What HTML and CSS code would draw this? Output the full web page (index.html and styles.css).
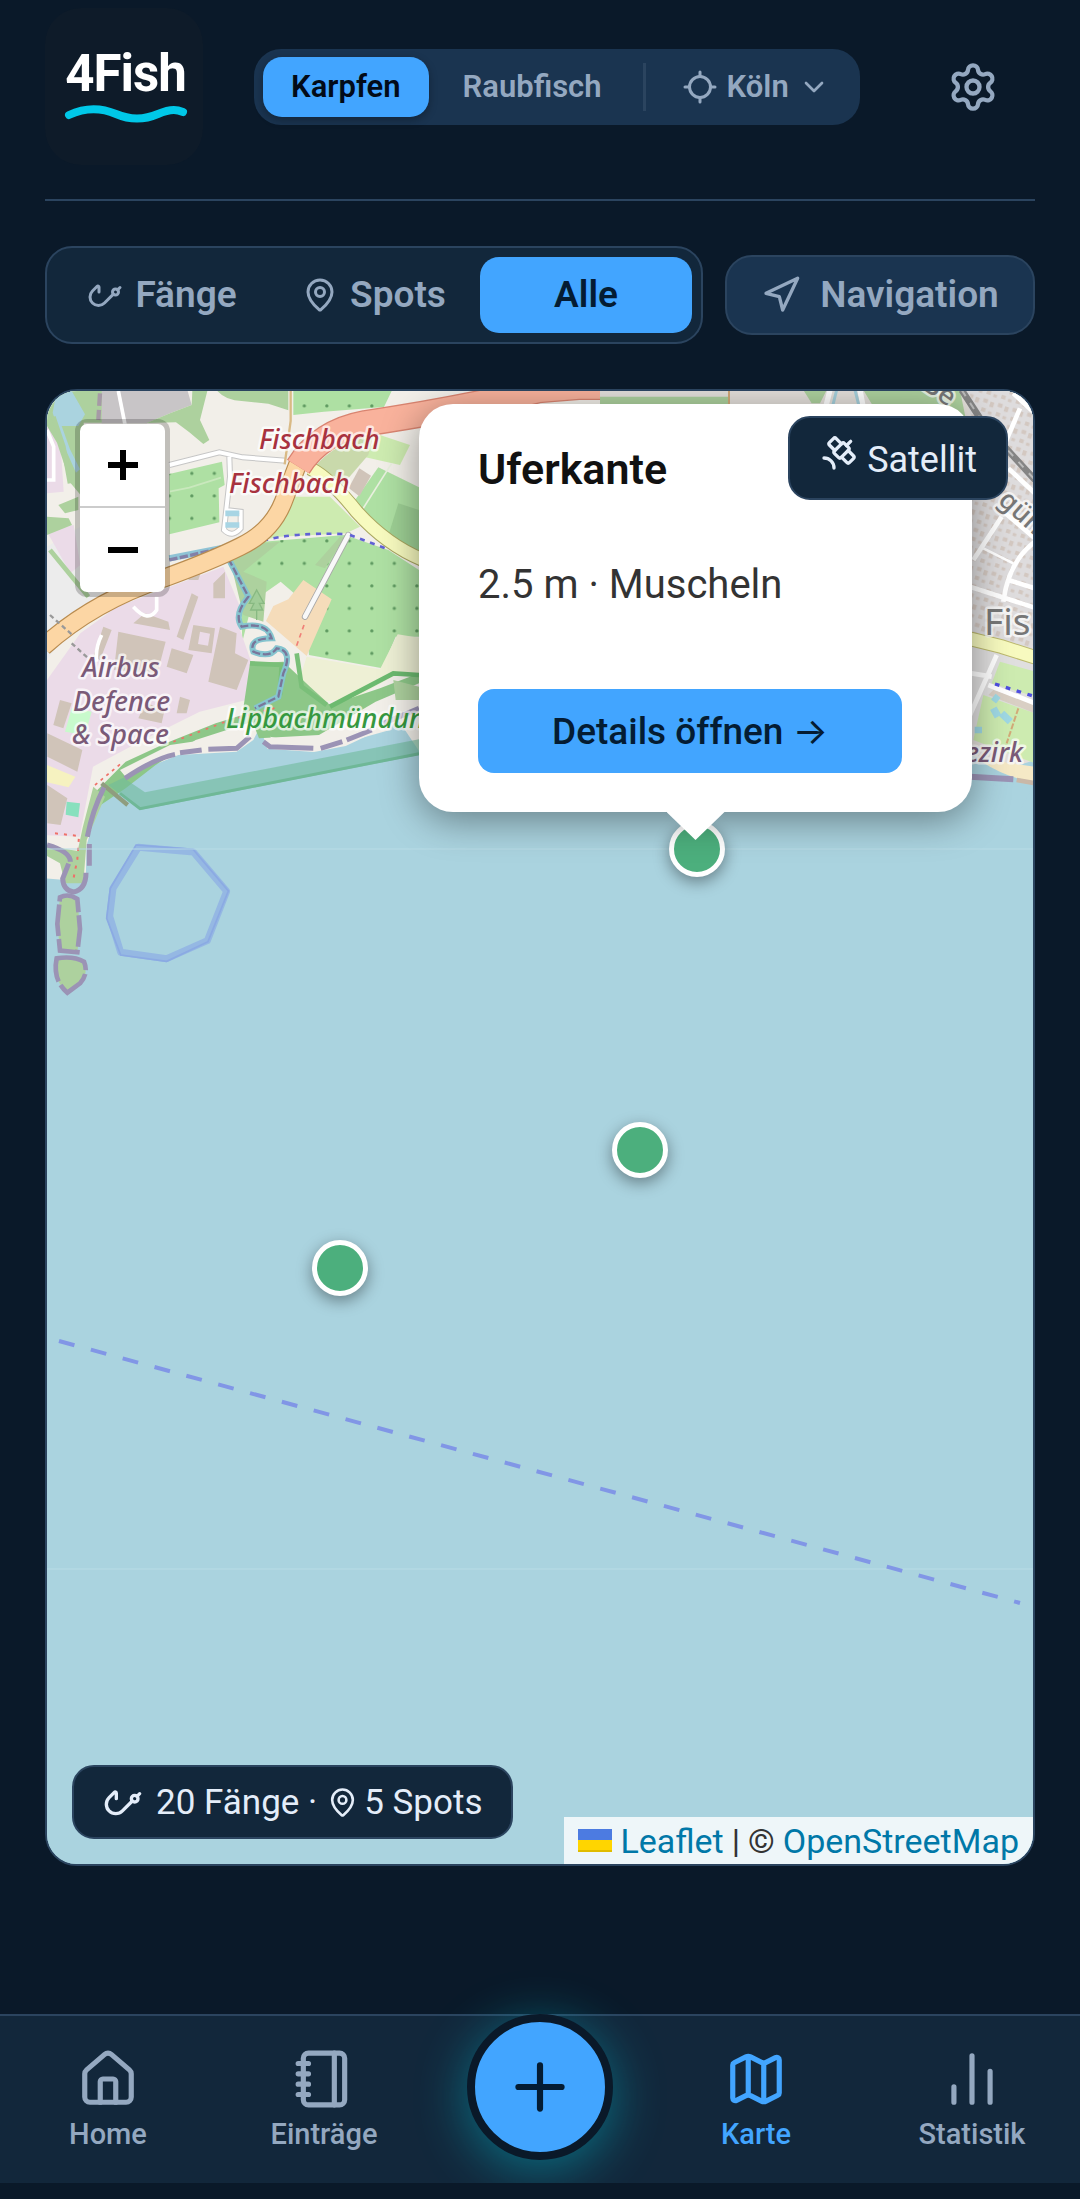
FILE: index.html
```html
<!DOCTYPE html>
<html lang="de">
<head>
<meta charset="utf-8">
<meta name="viewport" content="width=device-width, initial-scale=1">
<title>4Fish – Karte</title>
<link rel="stylesheet" href="styles.css">
</head>
<body>
<svg class="sprite" aria-hidden="true">
  <symbol id="i-hook" viewBox="0 0 24 24"><path d="m17.586 11.414-5.93 5.93a1 1 0 0 1-8-8l3.137-3.137a.707.707 0 0 1 1.207.5V10"/><path d="M20.414 8.586 22 7"/><circle cx="19" cy="10" r="2"/></symbol>
  <symbol id="i-pin" viewBox="0 0 24 24"><path d="M20 10c0 4.993-5.539 10.193-7.399 11.799a1 1 0 0 1-1.202 0C9.539 20.193 4 14.993 4 10a8 8 0 0 1 16 0"/><circle cx="12" cy="10" r="3"/></symbol>
</svg>

<header class="header">
  <a class="logo" href="#" aria-label="4Fish">
    <span class="logo-text">4Fish</span>
    <svg class="logo-wave" viewBox="0 0 124 18" aria-hidden="true"><path d="M5 10C22 2 38 3 52 9s28 6 42 0 20-4 25-2"/></svg>
  </a>
  <div class="mode">
    <button class="mode-btn is-active" type="button">Karpfen</button>
    <button class="mode-btn" type="button">Raubfisch</button>
    <span class="mode-divider"></span>
    <button class="place" type="button">
      <svg class="icon icon-36" viewBox="0 0 24 24"><path d="M2 12h3M19 12h3M12 2v3M12 19v3"/><circle cx="12" cy="12" r="7"/></svg>
      Köln
      <svg class="icon icon-chevron" viewBox="0 0 24 24"><path d="m6 9 6 6 6-6"/></svg>
    </button>
  </div>
  <button class="settings" type="button" aria-label="Einstellungen">
    <svg class="icon icon-52" viewBox="0 0 24 24"><path d="M9.671 4.136a2.34 2.34 0 0 1 4.659 0 2.34 2.34 0 0 0 3.319 1.915 2.34 2.34 0 0 1 2.33 4.033 2.34 2.34 0 0 0 0 3.831 2.34 2.34 0 0 1-2.33 4.033 2.34 2.34 0 0 0-3.319 1.915 2.34 2.34 0 0 1-4.659 0 2.34 2.34 0 0 0-3.32-1.915 2.34 2.34 0 0 1-2.33-4.033 2.34 2.34 0 0 0 0-3.831A2.34 2.34 0 0 1 6.35 6.051a2.34 2.34 0 0 0 3.319-1.915"/><circle cx="12" cy="12" r="3"/></svg>
  </button>
</header>

<main class="main">
  <div class="toolbar">
    <div class="filter">
      <button class="filter-btn" type="button"><svg class="icon icon-36"><use href="#i-hook"/></svg>Fänge</button>
      <button class="filter-btn" type="button"><svg class="icon icon-36"><use href="#i-pin"/></svg>Spots</button>
      <button class="filter-btn is-active" type="button">Alle</button>
    </div>
    <button class="nav-btn" type="button"><svg class="icon icon-40" viewBox="0 0 24 24"><path d="M3 11 22 2l-9 19-2-8z"/></svg>Navigation</button>
  </div>

  <section class="map" aria-label="Karte">
    <svg class="map-tiles" viewBox="47 391 986 1473" preserveAspectRatio="xMidYMin slice" aria-hidden="true">
      <defs>
        <pattern id="orchard" width="67.5" height="67.5" patternUnits="userSpaceOnUse" patternTransform="translate(-16 -19)"><circle cx="29" cy="29" r="5" fill="#5f9a61"/></pattern>
        <pattern id="houses" width="46" height="54" patternUnits="userSpaceOnUse" patternTransform="rotate(18)"><path d="M4 5h14v12H4zM26 9h12v16H26zM6 33h13v12H6zM28 38h11v9H28z" fill="#d3c8c1"/></pattern>
      </defs>
      <rect x="47" y="391" width="986" height="1473" fill="#aad3df"/>
      <g transform="translate(30 380) scale(.33333)">
        <path d="M51 33h2960v1080H1167l-60-90-160 75-95 18-140-10-22-66-20 40-50 35-175 10-110 45-60 35-60 40-45 150-3 110-120-10z" fill="#f2efe9"/>
        <path d="M51 500l100-60 60 200-100 120-60 80z" fill="#ececec"/>
        <path d="M51 140l40 40 10 155-50 5zM51 455l80-20 20 120-30 25z" fill="#ebdbe8"/>
        <path d="M51 33h170v95h-60l10 240-50-60-40-120-30-50z" fill="#add19e"/>
        <path d="M80 33l45 0 40 70-20 35-50 0 25 70 30 60-12 10-40-90-30-90z" fill="#aad3df"/>
        <path d="M85 375l60-25v40l-40 10zM51 410l65 5 10 20-75 30z" fill="#add19e"/>
        <path d="M60 510l115 140M70 110l30 90 20 110" stroke="#add19e" stroke-width="14" fill="none"/>
        <path d="M215 33h258l12 42-65 25-70 30H215z" fill="#c8c5c7"/>
        <path d="M265 33l20 100" stroke="#fff" stroke-width="11"/>
        <path d="M210 40l-5 80" stroke="#a69aa6" stroke-width="13" stroke-dasharray="38 12"/>
        <path d="M487 33h45l-22 87 28 60-18 12-42-35-40-30-88 2 70-29 65-25zM562 33h213v58l-60-20-80-8q-45 0-73-30z" fill="#add19e"/>
        <path d="M790 33h295l-23 48-180 14-92 10zM418 282l158-37 8 70-18 10 2 102-150 36z" fill="#aee0a3"/>
        <path d="M790 33h295l-23 48-180 14-92 10zM418 282l158-37 8 70-18 10 2 102-150 36z" fill="url(#orchard)"/>
        <path d="M418 335l60-12 95-30" stroke="#c9e8bd" stroke-width="5" fill="none"/>
        <path d="M1050 165l90 30-30 60-110-25z" fill="#cdebb0"/>
        <path d="M850 265q65-80 180-100l-15 60-95 110z" fill="#c9d9ab"/>
        <path d="M1045 262l122 60v200l-120-80-80-70z" fill="#aee0a3"/>
        <path d="M1105 370l62 20v130l-90-60z" fill="#9dcf94"/>
        <path d="M988 265l35 22-35 62-32-25z" fill="#d0c4b9"/>
        <path d="M1085 250l-95 150" stroke="#e9efdf" stroke-width="5"/>
        <path d="M790 350l110 0 90 90-42 20-200 10-48 10q55-50 90-130z" fill="#cdebb0"/>
        <path d="M600 540l100-55 245-20 130 45 92 60v200l-70 0-40 95-220-40-15-160-70-60-85 60-30 120-5-150z" fill="#aee0a3"/>
        <path d="M600 540l100-55 245-20 130 45 92 60v200l-70 0-40 95-220-40-15-160-70-60-85 60-30 120-5-150z" fill="url(#orchard)"/>
        <path d="M600 540l100-50 50-5-110 90 70 30-10 120-60-20zM855 555l75-85 15 0-60 95z" fill="#add19e"/>
        <path d="M820 600l85 58-75 170-122-105 22-45 45-20z" fill="#f5dcba"/>
        <path d="M830 830l220 38 53-105 64 10v115h-75l-125 70-80 5-82-55z" fill="#eef0d5"/>
        <path d="M822 735l-25 70" stroke="#f08078" stroke-width="5" stroke-dasharray="14 12"/>
        <path d="M955 465L825 710" stroke="#a8a8a8" stroke-width="19" stroke-linecap="round"/><path d="M955 465L825 710" stroke="#f8f8f8" stroke-width="14" stroke-linecap="round"/>
        <path d="M580 560l50 120-5 55 40 115 62 20 2 45-60 40-160 40-170 85-150 80-40 210-98-4V900l100-140 110-80z" fill="#ebdbe8"/>
        <g fill="#d0c4b9">
          <path d="M345 700l70 25 5 25-110-20zM485 570h30l-10 30h-30zM550 610l35-35v80h-35zM485 640l20 10-45 130-20-10zM265 755l142 30-25 95-130-10zM425 805l65 20-20 55-60-20zM570 740l50 20-5 60 40 20-35 90-85-25zM490 735l65 10-10 75-70-10zM220 740l25 10-35 90-20-10zM90 960l35 10-25 75-30-10zM345 970l60 15-10 45-70-15zM450 950l30 10-10 40h-30zM52 1060l105 50-15 65-90-45zM52 1215l60 40-20 80-40-5z"/>
        </g>
        <path d="M510 755l30 6-6 36-30-5z" fill="#ebdbe8"/>
        <path d="M125 985l60 10-20 70-60-10z" fill="#c8facc"/><path d="M110 1265l40 5-5 42-38-8z" fill="#88e0be"/>
        <path d="M51 1155l85 35-20 32-65-15z" fill="#f6f2c0"/>
        <path d="M660 850l100-5 80 75 60 55 150-50 117-45v30l-130 55-170 100-180 10-20-50-170 55-120 75-90 70-75 50-15-40 90-90 120-55 150-60 80-25z" fill="#8dc788"/>
        <path d="M800 820l15 100 75 55M660 850l95 5-5 90" stroke="#7abf79" stroke-width="14" fill="none"/>
        <path d="M430 1085l170-65 150-40" stroke="#ef7068" stroke-width="5" stroke-dasharray="8 18" fill="none"/>
        <path d="M900 980l190-100 77 5" stroke="#6cba70" stroke-width="14" fill="none"/>
        <path d="M1090 900l77 20v40l-70 0z" fill="#add19e"/>
        <path d="M270 1170l150-75 205-30 60-35-45 65-170 15-120 40-60 45zM720 1070l120 25 160-40 100-45-20 40-180 50-160-5z" fill="#f2efe9"/>
        <path d="M285 1195q90-60 150-72M450 1118l65-8M535 1108l85-3 40-35M700 1085l20 15 130 5M872 1105l65-20M950 1080l75-30M1060 1030l107-45" stroke="#9b93b5" stroke-width="15" fill="none"/>
        <path d="M235 1215l45-22 65 44 822-159v47l-837 165z" fill="#70ba9b" fill-opacity=".6"/>
        <path d="M270 1240l60 46 837-165" stroke="#6fb897" stroke-width="9" fill="none"/><path d="M215 1210l78 65" stroke="#8f9d7f" stroke-width="13"/>
        <path d="M190 1220l35 30-55 130-10 130h-55l-15-60-39-22v-30l92 15 15-70z" fill="#add19e"/>
        <path d="M195 1215l85-70" stroke="#ef7068" stroke-width="5" stroke-dasharray="9 13"/>
        <path d="M75 1360l72 8-5 70-12 60" stroke="#ef7068" stroke-width="6" stroke-dasharray="9 18" fill="none"/>
        <path d="M222 1222q-35 70-50 148M178 1392v65M168 1478q0 50-38 58-30-5-32-40l18-45M51 1395q70 20 70 50" stroke="#9b93b5" stroke-width="15" fill="none"/>
        <path d="M90 1552q25-13 52 5l8 90-8 70-52-5-8-80z" fill="#add19e" stroke="#9b93b5" stroke-width="14" stroke-dasharray="95 9"/>
        <path d="M80 1735q50-8 82 10 15 35-12 65l-38 28q-45-38-32-103z" fill="#add19e" stroke="#9b93b5" stroke-width="14" stroke-dasharray="110 12"/>
        <path d="M325 1402l165 14 100 118-58 148-122 54-138-19-33-108 10-84z" fill="none" stroke="#95b8e3" stroke-width="21" stroke-linejoin="round"/>
        <path d="M318 1395l171 13 106 125-61 152-124 59-138-19-42-110 11-90z" fill="none" stroke="#8baae3" stroke-width="5"/>
        <g fill="none">
          <path d="M418 255l150-38 70 15 130 10M598 230l2 60-18 160q25 25 50-5v-50l-45-5" stroke="#c6c6c6" stroke-width="18"/>
          <path d="M418 255l150-38 70 15 130 10M598 230l2 60-18 160q25 25 50-5v-50l-45-5" stroke="#fff" stroke-width="12"/>
          <path d="M586 400h42M586 435h42" stroke="#a8d5e4" stroke-width="17"/>
          <path d="M782 33v90l-18 130" stroke="#d9ba85" stroke-width="7"/>
          <path d="M418 535l165-32" stroke="#8fc3d5" stroke-width="19"/><path d="M418 540l155-35" stroke="#8380a8" stroke-width="10" stroke-dasharray="25 7"/>
          <path d="M595 535l60 115q-45 55-20 90 75-15 90 35-70 0-55 40 50 20 70-10 50 5 20 75l-15 70-70 35" stroke="#86c4cf" stroke-width="18"/>
          <path d="M595 535l60 115q-45 55-20 90 75-15 90 35-70 0-55 40 50 20 70-10 50 5 20 75l-15 70-70 35" stroke="#79769a" stroke-width="7" stroke-dasharray="24 8"/>
          <path d="M700 482q90-25 240-20M960 465l120 45" stroke="#6161d5" stroke-width="8" stroke-dasharray="15 17"/>
          <path d="M840 265q60 30 140 130 90 100 200 145" stroke="#a9a760" stroke-width="43"/><path d="M840 265q60 30 140 130 90 100 200 145" stroke="#f7fabf" stroke-width="37"/>
          <path d="M810 235l-50 130q-35 90-130 135-80 40-230 95-210 70-360 205" stroke="#b98c50" stroke-width="57"/><path d="M810 235l-50 130q-35 90-130 135-80 40-230 95-210 70-360 205" stroke="#fcd6a4" stroke-width="50"/>
          <path d="M805 260q65-105 200-130 300-45 520-100l120-10h170" stroke="#d98470" stroke-width="80"/><path d="M805 260q65-105 200-130 300-45 520-100l120-10h170" stroke="#f9b29c" stroke-width="72"/>
          <path d="M60 705l65 58M125 790l50 45" stroke="#999" stroke-width="7" stroke-dasharray="14 10"/>
          <path d="M310 680q45 50 70 10v-40M51 150l20 50v100H51M215 765q-20 40-15 80" stroke="#fff" stroke-width="11"/>
        </g>
        <path d="M680 630l22 40-14 0 10 20h-36l10-20-14 0zM680 690v30" fill="#a0cc98" stroke="#88b982" stroke-width="4"/>
      </g>
      <g transform="translate(600 385) scale(.33333)">
        <path d="M0 15h1305v1110l-190 60-1115-300z" fill="#e4e0db"/>
        <path d="M0 35h385v60H0zM610 15h70l-20 40h-25zM790 15h290l20 100H850z" fill="#add19e"/><path d="M387 15v60" stroke="#d2a978" stroke-width="6"/>
        <path d="M690 15l-20 80M780 15l15 80" stroke="#fff" stroke-width="16"/><path d="M710 15l-20 80M765 15l20 80" stroke="#a5d0dc" stroke-width="9"/>
        <path d="M1090 15h215v800l-190-60V100z" fill="#dedcdd"/><path d="M1110 15h195v800l-190-60V100z" fill="url(#houses)"/>
        <path d="M1110 745l195 60v320l-190-60z" fill="#e0dfdf"/>
        <path d="M1200 830l105 30v75l-130-40zM1150 930l155 55v150l-185-70z" fill="#cdebb0"/>
        <path d="M1180 915l125 40v30l-140-55z" fill="#d9cfc4"/>
        <g fill="none" stroke="#fff" stroke-width="14">
          <path d="M1305 325L1225 250M1205 395l-85 130M1205 375l100 85M1305 470q-80 60-95 180M1110 605l200 65M1225 585l80 25M1260 70l-60 140M1190 810l-80 180M1115 865l60 10M1165 900l140 55M1240 25l65 60"/>
          <path d="M1150 490l90 45" stroke-width="8"/>
        </g>
        <path d="M1085 15l65 100 155 170" stroke="#858585" stroke-width="20" fill="none"/><path d="M1085 15l65 100 155 170" stroke="#bbb" stroke-width="6" stroke-dasharray="22 24" fill="none"/>
        <path d="M1105 760l100 25 110 35" stroke="#bcb96d" stroke-width="44" fill="none"/><path d="M1105 760l100 25 110 35" stroke="#f7fabf" stroke-width="38" fill="none"/>
        <path d="M1185 897l120 38" stroke="#4e4ee0" stroke-width="10" stroke-dasharray="14 20"/>
        <path d="M1180 935l15 12M1180 970l14 25M1205 985l26 25M1135 1025v20" stroke="#9fd8e3" stroke-width="22"/>
        <path d="M1255 970l-35 105" stroke="#d2a978" stroke-width="6" stroke-dasharray="18 6"/>
        <path d="M1110 1110l195 55v60H1110z" fill="#aad3df"/><path d="M1130 1120l175 25v45q-90-10-175-70z" fill="#f5e9c6"/>
        <path d="M1110 1175l130 8" stroke="#9b93b5" stroke-width="18"/><path d="M1250 1185l55 10" stroke="#c9b8a8" stroke-width="14"/>
        <path d="M1110 1195l195 15v90H1000z" fill="#aad3df"/>
      </g>
      <path d="M419 812h600l14-26v80H419z" fill="#aad3df"/>
      <path d="M47 849h986M47 1569h986" stroke="#b9dce6" stroke-width="1"/>
      <path d="M59 1341l961 262" stroke="#8196e6" stroke-width="4" stroke-dasharray="16 17"/>
      <g class="map-labels">
        <g fill="#a8323f"><text x="259" y="449">Fischbach</text><text x="229" y="493">Fischbach</text></g>
        <g fill="#7a5a78"><text x="82" y="677">Airbus</text><text x="73" y="711">Defence</text><text x="72" y="744">&amp; Space</text><text x="965" y="762">ezirk</text></g>
        <text x="226" y="728" fill="#35983f">Lipbachmündung</text>
        <text class="upright place-name" x="984" y="635">Fis</text>
        <text class="upright" transform="translate(997 502) rotate(42)">günstr.</text>
        <text class="upright" transform="translate(921 388) rotate(35)">Be</text>
      </g>
    </svg>

    <button class="marker marker-kante" type="button" aria-label="Uferkante"></button>
    <button class="marker marker-mitte" type="button" aria-label="Spot Mitte"></button>
    <button class="marker marker-west" type="button" aria-label="Spot West"></button>

    <div class="zoom">
      <button type="button" aria-label="Vergrößern"><svg viewBox="0 0 30 30"><path d="M0 15h30M15 0v30"/></svg></button>
      <button type="button" aria-label="Verkleinern"><svg viewBox="0 0 30 30"><path d="M0 15h30"/></svg></button>
    </div>

    <article class="popup">
      <h2>Uferkante</h2>
      <p>2.5 m · Muscheln</p>
      <button class="details" type="button">Details öffnen <span class="arrow">→</span></button>
    </article>

    <button class="layer" type="button"><svg class="icon icon-40" viewBox="0 0 24 24"><path d="m13.5 6.5-3.148-3.148a1.205 1.205 0 0 0-1.704 0L6.352 5.648a1.205 1.205 0 0 0 0 1.704L9.5 10.5M16.5 7.5 19 5M17.5 10.5l3.148 3.148a1.205 1.205 0 0 1 0 1.704l-2.296 2.296a1.205 1.205 0 0 1-1.704 0L13.5 14.5M9 21a6 6 0 0 0-6-6"/><path d="M9.352 10.648a1.205 1.205 0 0 0 0 1.704l2.296 2.296a1.205 1.205 0 0 0 1.704 0l4.296-4.296a1.205 1.205 0 0 0 0-1.704l-2.296-2.296a1.205 1.205 0 0 0-1.704 0z"/></svg>Satellit</button>

    <div class="stats">
      <span class="stat stat-catches"><svg class="icon icon-40"><use href="#i-hook"/></svg>20 Fänge ·</span>
      <span class="stat"><svg class="icon icon-pin"><use href="#i-pin"/></svg>5 Spots</span>
    </div>

    <div class="credit">
      <svg class="flag" viewBox="0 0 34 23" aria-hidden="true"><path fill="#4c7be1" d="M0 0h34v12H0z"/><path fill="#ffd500" d="M0 11h34v12H0z"/><path fill="#e0bc00" d="M0 21h34v2H0z"/></svg>
      <a href="#">Leaflet</a><span>|</span><span>©</span><a href="#">OpenStreetMap</a>
    </div>
  </section>
</main>

<nav class="tabs">
  <a class="tab" href="#"><svg class="icon icon-tab" viewBox="0 0 24 24"><path d="M15 21v-8a1 1 0 0 0-1-1h-4a1 1 0 0 0-1 1v8"/><path d="M3 10a2 2 0 0 1 .709-1.528l7-5.999a2 2 0 0 1 2.582 0l7 5.999A2 2 0 0 1 21 10v9a2 2 0 0 1-2 2H5a2 2 0 0 1-2-2z"/></svg>Home</a>
  <a class="tab" href="#"><svg class="icon icon-tab" viewBox="0 0 24 24"><path d="M2 6h4M2 10h4M2 14h4M2 18h4M16 2v20"/><rect width="16" height="20" x="4" y="2" rx="2"/></svg>Einträge</a>
  <button class="add" type="button" aria-label="Hinzufügen"><svg class="icon icon-add" viewBox="0 0 24 24"><path d="M5 12h14M12 5v14"/></svg></button>
  <a class="tab is-active" href="#"><svg class="icon icon-tab" viewBox="0 0 24 24"><path d="M14.106 5.553a2 2 0 0 0 1.788 0l3.659-1.83A1 1 0 0 1 21 4.619v12.764a1 1 0 0 1-.553.894l-4.553 2.277a2 2 0 0 1-1.788 0l-4.212-2.106a2 2 0 0 0-1.788 0l-3.659 1.83A1 1 0 0 1 3 19.381V6.618a1 1 0 0 1 .553-.894l4.553-2.277a2 2 0 0 1 1.788 0zM15 5.764v15M9 3.236v15"/></svg>Karte</a>
  <a class="tab" href="#"><svg class="icon icon-tab" viewBox="0 0 24 24"><path d="M5 21v-6M12 21V3M19 21V9"/></svg>Statistik</a>
</nav>
<div class="safe-area"></div>
</body>
</html>
```
FILE: styles.css
```css
:root {
  --bg: #0a1929;
  --panel: #12273b;
  --raised: #1a3450;
  --line: #2b445f;
  --muted: #94a8c0;
  --text: #e4edf9;
  --accent: #42a5ff;
  --ink: #041c33;
}

* { box-sizing: border-box; }

body {
  margin: 0;
  min-height: 100vh;
  display: flex;
  flex-direction: column;
  background: var(--bg);
  color: var(--text);
  font-family: Roboto, "Liberation Sans", sans-serif;
}

button {
  margin: 0;
  padding: 0;
  border: 0;
  background: none;
  color: inherit;
  font: inherit;
}

a { text-decoration: none; }

.sprite { position: absolute; width: 0; height: 0; }

.icon {
  flex: none;
  fill: none;
  stroke: currentColor;
  stroke-width: 2;
  stroke-linecap: round;
  stroke-linejoin: round;
}
.icon-36 { width: 36px; height: 36px; }
.icon-40 { width: 40px; height: 40px; }
.icon-52 { width: 52px; height: 52px; }
.icon-pin { width: 31px; height: 31px; }
.icon-chevron { width: 32px; height: 32px; }
.icon-tab { width: 62px; height: 62px; }
.icon-add { width: 74px; height: 74px; }

/* Header */
.header {
  display: flex;
  align-items: center;
  gap: 51px;
  margin: 0 45px;
  padding: 8px 0 34px;
  border-bottom: 2px solid var(--line);
}

.logo {
  display: flex;
  flex-direction: column;
  align-items: center;
  width: 158px;
  height: 157px;
  padding: 36px 0 0 3px;
  border-radius: 36px;
  background: #0e1b29;
  color: #fff;
}
.logo-text {
  font-size: 51px;
  line-height: 60px;
  font-weight: 700;
  letter-spacing: -1px;
}
.logo-wave {
  width: 124px;
  height: 18px;
  margin-top: 1px;
  fill: none;
  stroke: #00c8e8;
  stroke-width: 8;
  stroke-linecap: round;
  overflow: visible;
}

.mode {
  flex: 1;
  display: flex;
  align-items: center;
  gap: 6px;
  height: 76px;
  padding: 0 9px;
  border-radius: 27px;
  background: var(--raised);
  color: var(--muted);
  font-size: 31px;
  font-weight: 600;
}
.mode-btn {
  height: 60px;
  padding: 0 28px;
  border-radius: 19px;
}
.mode-btn.is-active {
  background: var(--accent);
  color: #020b18;
  box-shadow: 0 3px 8px rgba(0, 0, 0, .3);
}
.mode-divider {
  width: 3px;
  height: 48px;
  margin: 0 8px 0 7px;
  background: var(--line);
}
.place {
  display: flex;
  align-items: center;
  gap: 9px;
  height: 60px;
  padding: 0 18px 0 22px;
}

.settings {
  display: grid;
  place-items: center;
  width: 124px;
  height: 124px;
  color: var(--muted);
}

/* Filter row */
.main {
  flex: 1;
  display: flex;
  flex-direction: column;
  gap: 45px;
  padding: 45px 45px 148px;
}
.toolbar {
  display: flex;
  align-items: center;
  gap: 22px;
  color: var(--muted);
  font-size: 37px;
  line-height: 42px;
  font-weight: 600;
}
.filter {
  flex: 1;
  display: grid;
  grid-template-columns: repeat(3, 1fr);
  padding: 9px;
  border: 2px solid var(--line);
  border-radius: 27px;
  background: var(--panel);
}
.filter-btn {
  display: flex;
  align-items: center;
  justify-content: center;
  gap: 12px;
  height: 76px;
  border-radius: 19px;
}
.filter-btn.is-active {
  background: var(--accent);
  color: var(--ink);
}
.nav-btn {
  display: flex;
  align-items: center;
  justify-content: center;
  gap: 19px;
  width: 310px;
  height: 80px;
  border: 2px solid var(--line);
  border-radius: 27px;
  background: var(--raised);
}

/* Map */
.map {
  flex: 1;
  position: relative;
  min-height: 900px;
  overflow: hidden;
  border: 2px solid var(--line);
  border-radius: 32px;
  background: #aad3df;
}
.map-tiles {
  position: absolute;
  inset: 0;
  width: 100%;
  height: 100%;
}
.map-labels {
  font: italic 500 27px "Noto Sans", sans-serif;
  stroke: rgba(255, 255, 255, .7);
  stroke-width: 5;
  stroke-linejoin: round;
  paint-order: stroke;
}
.map-labels .upright { font-style: normal; fill: #777; }
.map-labels .place-name { font-size: 37px; font-weight: 400; }

.marker {
  position: absolute;
  width: 56px;
  height: 56px;
  margin: -28px 0 0 -28px;
  border: 5px solid #fff;
  border-radius: 50%;
  background: #4caf7d;
  box-shadow: 0 5px 16px rgba(0, 0, 0, .4);
}
.marker-kante { left: 650px; top: 458px; }
.marker-mitte { left: 593px; top: 759px; }
.marker-west { left: 293px; top: 877px; }

.zoom {
  position: absolute;
  top: 28px;
  left: 28px;
  width: 95px;
  border: 5px solid rgba(0, 0, 0, .2);
  border-radius: 12px;
  background: #fff;
  background-clip: padding-box;
}
.zoom button {
  display: grid;
  place-items: center;
  width: 85px;
  height: 84px;
}
.zoom button:first-child { border-bottom: 2px solid #ccc; }
.zoom svg {
  width: 30px;
  height: 30px;
  stroke: #000;
  stroke-width: 6;
}

.popup {
  position: absolute;
  top: 13px;
  left: 372px;
  width: 553px;
  padding: 41px 70px 39px 59px;
  border-radius: 34px;
  background: #fff;
  color: #333;
  box-shadow: 0 8px 38px rgba(0, 0, 0, .4);
}
.popup::after {
  content: "";
  position: absolute;
  top: 100%;
  left: 50%;
  width: 58px;
  height: 28px;
  margin-left: -29px;
  background: #fff;
  clip-path: polygon(0 0, 100% 0, 50% 100%);
}
.popup h2 {
  margin: 0 0 68px;
  color: #111;
  font-size: 43px;
  line-height: 48px;
  font-weight: 600;
}
.popup p {
  margin: 0 0 80px;
  font-size: 40px;
  line-height: 48px;
  font-weight: 400;
  -webkit-text-stroke: 0;
}
.details {
  width: 100%;
  height: 84px;
  border-radius: 16px;
  background: var(--accent);
  color: var(--ink);
  font-size: 37px;
  line-height: 44px;
  font-weight: 500;
}
.arrow { font-family: Inter, sans-serif; font-weight: 400; }

.layer {
  position: absolute;
  top: 25px;
  right: 25px;
  display: flex;
  align-items: center;
  gap: 8px;
  height: 84px;
  padding: 4px 29px 0;
  border: 2px solid var(--line);
  border-radius: 22px;
  background: var(--panel);
  font-size: 36px;
}
.layer .icon { margin-bottom: 14px; }

.stats {
  position: absolute;
  left: 25px;
  bottom: 25px;
  display: flex;
  align-items: center;
  gap: 10px;
  height: 74px;
  padding: 0 29px;
  border: 2px solid var(--line);
  border-radius: 22px;
  background: var(--panel);
  font-size: 35px;
}
.stat {
  display: flex;
  align-items: center;
  gap: 6px;
}
.stat-catches { gap: 13px; }

.credit {
  position: absolute;
  right: 0;
  bottom: 0;
  display: flex;
  align-items: center;
  gap: 8px;
  height: 47px;
  padding: 0 14px;
  background: rgba(255, 255, 255, .8);
  color: #333;
  font-size: 34px;
}
.credit a { color: #0078a8; }
.flag { width: 34px; height: 23px; }

/* Bottom tabs */
.tabs {
  display: grid;
  grid-template-columns: repeat(5, 1fr);
  height: 169px;
  border-top: 2px solid var(--line);
  background: var(--panel);
}
.tab {
  display: flex;
  flex-direction: column;
  align-items: center;
  gap: 8px;
  padding-top: 32px;
  color: var(--muted);
  font-size: 29px;
  line-height: 32px;
  font-weight: 500;
}
.tab.is-active { color: var(--accent); }
.add {
  justify-self: center;
  display: grid;
  place-items: center;
  width: 146px;
  height: 146px;
  margin-top: -2px;
  border: 8px solid var(--bg);
  border-radius: 50%;
  background: var(--accent);
  color: var(--ink);
  box-shadow: 0 10px 52px rgba(0, 200, 220, .45);
}
.safe-area {
  position: relative;
  height: 16px;
  background: var(--bg);
}
```
